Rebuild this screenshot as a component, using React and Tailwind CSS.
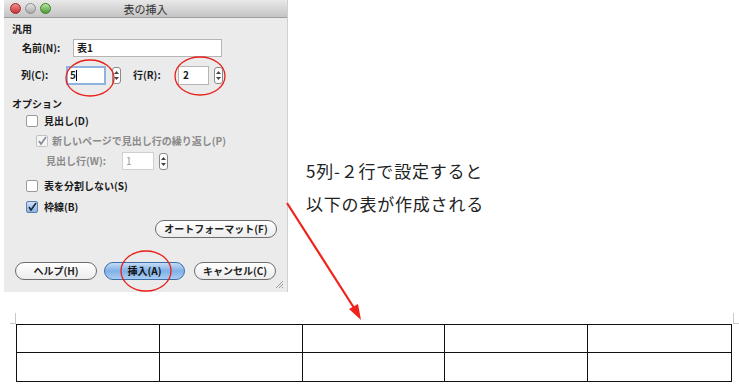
import React from "react";

const JP = { fontFamily: '"Noto Sans CJK JP", "Noto Sans", sans-serif' };

function Stepper({ className = "" }) {
  return (
    <div className={`w-[9px] h-[17px] rounded-[3px] border border-[#8a8a8a] bg-white flex flex-col items-center justify-center gap-[3px] ${className}`}>
      <svg width="5" height="3" viewBox="0 0 5 3"><path d="M0 3 L2.5 0 L5 3 Z" fill="#444" /></svg>
      <svg width="5" height="3" viewBox="0 0 5 3"><path d="M0 0 L2.5 3 L5 0 Z" fill="#444" /></svg>
    </div>
  );
}

function Box({ checked, dim }) {
  return (
    <span
      className={`w-[12px] h-[12px] rounded-[2px] border flex items-center justify-center ${
        checked && !dim ? "border-[#5b7fae] bg-gradient-to-b from-[#cfe0f5] to-[#8fb3de]" : "border-[#9a9a9a] bg-white"
      } ${dim ? "opacity-50" : ""}`}
    >
      {checked && (
        <svg width="10" height="10" viewBox="0 0 10 10">
          <path d="M2 5 L4 8 L9 1" stroke="#1b2a40" strokeWidth="1.6" fill="none" />
        </svg>
      )}
    </span>
  );
}

function Pill({ children, blue, className = "" }) {
  return (
    <div
      className={`h-[18px] rounded-full border flex items-center justify-center text-[10px] leading-[14px] font-bold ${
        blue
          ? "border-[#3d6ea8] bg-gradient-to-b from-[#c5dcf5] via-[#7fb0e6] to-[#a9cdf2] text-[#111]"
          : "border-[#6d6d6d] bg-gradient-to-b from-white to-[#ececec] text-[#222]"
      } ${className}`}
    >
      {children}
    </div>
  );
}

function Dialog() {
  return (
    <div className="relative ml-[4px] w-[283px] h-[292px] bg-[#ebebeb] flex flex-col text-[10px] leading-[14px] text-[#1a1a1a] shadow-[1px_0_0_#cfcfcf]" style={JP}>
      <div className="h-[18px] rounded-t-[5px] bg-gradient-to-b from-[#e9e9e9] to-[#c4c4c4] border-b border-[#9d9d9d] flex items-center relative">
        <div className="flex gap-[4px] pl-[6px]">
          <span className="w-[11px] h-[11px] rounded-full bg-gradient-to-b from-[#f08a8a] to-[#c9303a] border border-[#9c2a2a]" />
          <span className="w-[11px] h-[11px] rounded-full bg-gradient-to-b from-[#e6e6e6] to-[#a9a9a9] border border-[#8c8c8c]" />
          <span className="w-[11px] h-[11px] rounded-full bg-gradient-to-b from-[#b8e6a0] to-[#4c9a33] border border-[#3f7f2a]" />
        </div>
        <span className="absolute left-0 right-0 text-center text-[11px] text-[#333]">表の挿入</span>
      </div>

      <div className="flex flex-col pl-[8px] pt-[4px]">
        <div className="font-bold h-[14px]">汎用</div>
        <div className="flex items-center mt-[3px] pl-[10px] h-[18px]">
          <span className="font-bold w-[51px]">名前(N):</span>
          <div className="w-[149px] h-[18px] bg-white border border-[#b5b5b5] flex items-center pl-[3px] font-bold">表1</div>
        </div>
        <div className="flex items-center mt-[8px] pl-[9px] h-[20px]">
          <span className="font-bold w-[45px]">列(C):</span>
          <div className="w-[40px] h-[19px] bg-white border-2 border-[#8fb2e0] flex items-center pl-[2px] font-bold">
            5<span className="w-px h-[11px] bg-black" />
          </div>
          <Stepper className="ml-[6px]" />
          <span className="font-bold ml-[12px] w-[45px]">行(R):</span>
          <div className="w-[31px] h-[19px] bg-white border border-[#b5b5b5] flex items-center pl-[4px] font-bold">2</div>
          <Stepper className="ml-[5px]" />
        </div>

        <div className="font-bold mt-[12px] h-[14px]">オプション</div>
        <div className="flex items-center gap-[6px] pl-[14px] mt-[3px] h-[14px]">
          <Box /> <span className="font-bold">見出し(D)</span>
        </div>
        <div className="flex items-center gap-[4px] pl-[24px] mt-[6px] h-[14px] text-[#8a8a8a]">
          <Box checked dim /> <span className="font-bold">新しいページで見出し行の繰り返し(P)</span>
        </div>
        <div className="flex items-center pl-[34px] mt-[4px] h-[18px] text-[#8a8a8a]">
          <span className="font-bold w-[76px]">見出し行(W):</span>
          <div className="w-[32px] h-[18px] bg-white border border-[#d0d0d0] flex items-center pl-[3px] text-[#999]">1</div>
          <Stepper className="ml-[5px]" />
        </div>
        <div className="flex items-center gap-[6px] pl-[14px] mt-[9px] h-[14px]">
          <Box /> <span className="font-bold">表を分割しない(S)</span>
        </div>
        <div className="flex items-center gap-[6px] pl-[14px] mt-[7px] h-[14px]">
          <Box checked /> <span className="font-bold">枠線(B)</span>
        </div>
        <div className="flex justify-end pr-[10px] mt-[6px]">
          <Pill className="w-[122px]">オートフォーマット(F)</Pill>
        </div>
        <div className="flex items-center mt-[24px] pl-[3px] gap-[7px]">
          <Pill className="w-[82px]">ヘルプ(H)</Pill>
          <Pill blue className="w-[81px]">挿入(A)</Pill>
          <Pill className="w-[82px] ml-[2px]">キャンセル(C)</Pill>
        </div>
      </div>

      <svg className="absolute right-[3px] bottom-[3px]" width="9" height="9" viewBox="0 0 9 9">
        <path d="M8 1 L1 8 M8 4 L4 8 M8 7 L7 8" stroke="#9a9a9a" strokeWidth="1" />
      </svg>

      <svg className="absolute left-0 top-0 pointer-events-none" width="283" height="292">
        <ellipse cx="86" cy="78" rx="24" ry="18" fill="none" stroke="#e8201a" strokeWidth="1.3" />
        <ellipse cx="196" cy="76" rx="25" ry="19" fill="none" stroke="#e8201a" strokeWidth="1.3" />
        <ellipse cx="142" cy="271" rx="25" ry="20" fill="none" stroke="#e8201a" strokeWidth="1.3" />
      </svg>
    </div>
  );
}

export default function App() {
  const cols = [0, 1, 2, 3, 4];
  return (
    <div className="relative w-[739px] h-[387px] bg-white overflow-hidden">
      <div className="flex">
        <Dialog />
        <div className="pl-[19px] pt-[154px] text-[17px] leading-[33px] text-[#222] tracking-[0.8px]" style={JP}>
          <div className="h-[33px]">5列-２行で設定すると</div>
          <div className="h-[33px]">以下の表が作成される</div>
        </div>
      </div>

      <svg className="absolute left-0 top-0 pointer-events-none" width="739" height="387">
        <line x1="287" y1="203" x2="356" y2="311" stroke="#f0231b" strokeWidth="2.2" />
        <path d="M361 320 L349 309 L358 304 Z" fill="#f0231b" />
      </svg>

      <div className="mt-[32px] ml-[10px] relative">
        <div className="absolute left-0 top-[-11px] w-[6px] h-[11px] border-r border-b border-[#c8c8c8]" />
        <div className="absolute left-[723px] top-[-11px] w-[6px] h-[11px] border-l border-b border-[#c8c8c8]" />
        <div className="ml-[6px] w-[716px] border-[1.5px] border-[#111] grid grid-cols-5">
          {[0, 1].map((r) =>
            cols.map((c) => (
              <div
                key={`${r}-${c}`}
                className={`h-[28px] ${c < 4 ? "border-r-[1.5px] border-r-[#111]" : ""} ${r === 0 ? "border-b-[1.5px] border-b-[#111]" : ""}`}
              />
            ))
          )}
        </div>
      </div>
    </div>
  );
}
